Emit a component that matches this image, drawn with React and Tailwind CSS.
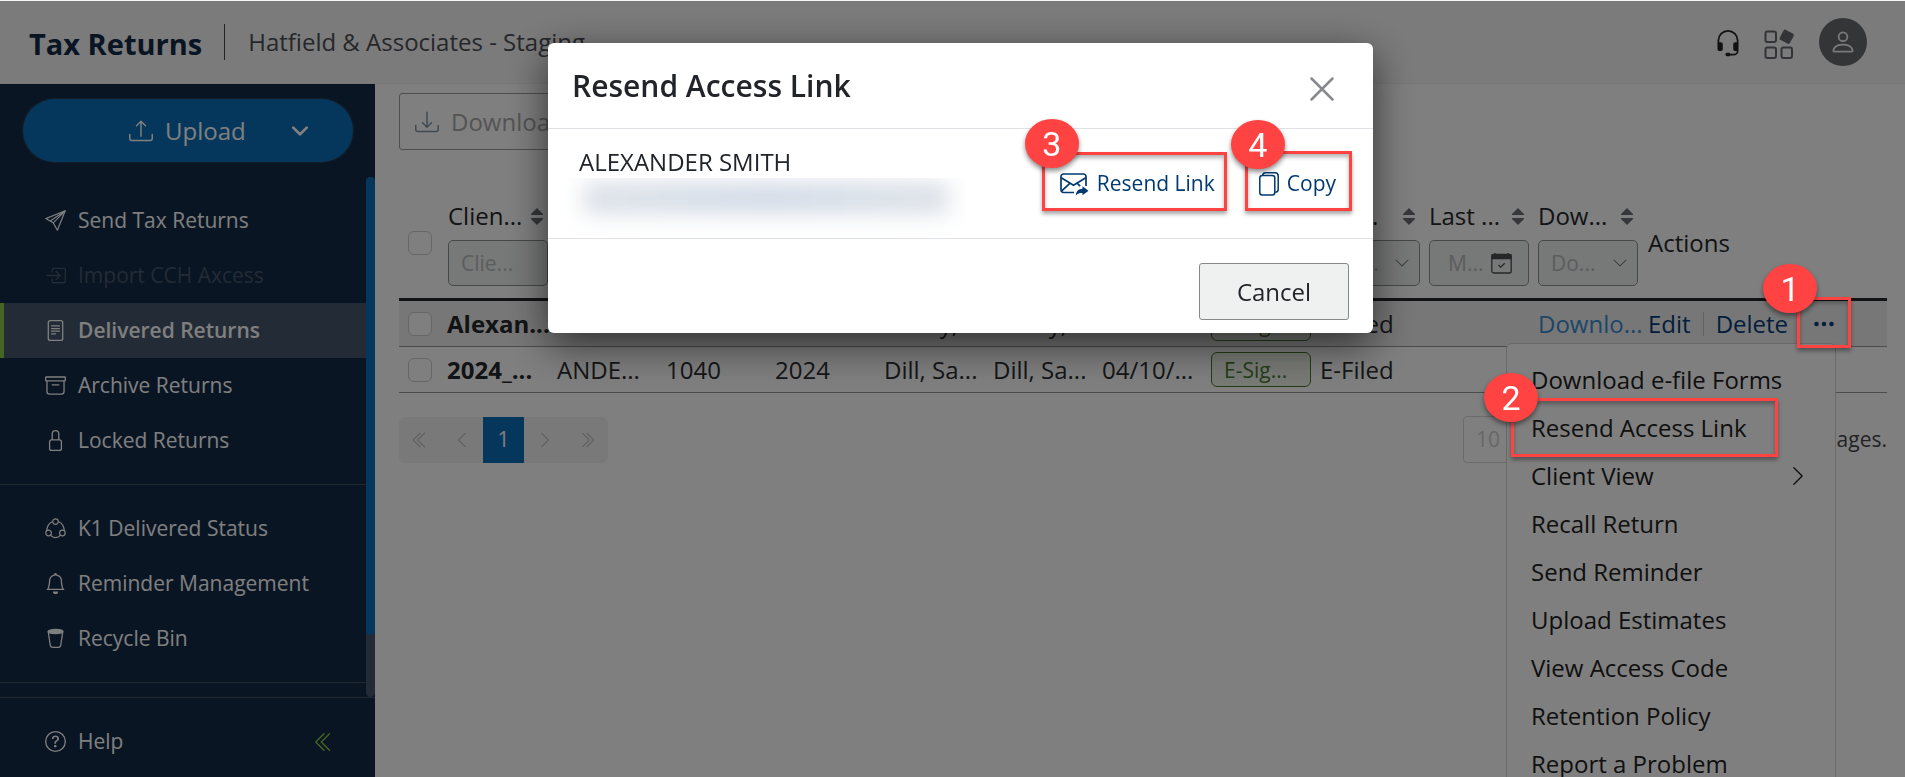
import React from 'react';
import { clsx } from 'clsx';
import {
  BsArchive,
  BsBell,
  BsBoxArrowInRight,
  BsChevronDoubleLeft,
  BsChevronDoubleRight,
  BsChevronDown,
  BsChevronLeft,
  BsChevronRight,
  BsDownload,
  BsFileText,
  BsHeadset,
  BsLock,
  BsPerson,
  BsQuestionCircle,
  BsThreeDots,
  BsUpload,
} from 'react-icons/bs';

const SendIcon = ({ className }) => (
  <svg viewBox="0 0 21 21" className={className} fill="none" stroke="currentColor" strokeWidth="1.2" strokeLinejoin="round">
    <path d="M20.2 0.8 0.8 8.6l7.4 4.2 4.2 7.4Z" />
    <path d="M20.2 0.8 8.2 12.8M20.2 0.8 5.2 11" />
  </svg>
);

const NetworkIcon = ({ className }) => (
  <svg viewBox="0 0 21 21" className={className} fill="none" stroke="currentColor" strokeWidth="1.2">
    <circle cx="10.5" cy="3.6" r="2.8" />
    <circle cx="3.6" cy="15" r="2.8" />
    <circle cx="17.4" cy="15" r="2.8" />
    <path d="M7.7 3.5C4 5 2 8.5 1.7 13M13.3 3.5C17 5 19 8.5 19.3 13M5.5 17.2c2.5 3.2 7.500 3.200 10 0" />
  </svg>
);

const BucketIcon = ({ className }) => (
  <svg viewBox="0 0 21 21" className={className} fill="none" stroke="currentColor" strokeWidth="1.3">
    <path d="m3.2 3.5 2 13.5c.2 1.5 1.3 2.3 2.6 2.3h5.4c1.3 0 2.4-.8 2.6-2.3l2-13.5" />
    <ellipse cx="10.5" cy="3.5" rx="7.4" ry="2" fill="currentColor" />
  </svg>
);

const AppsIcon = () => (
  <svg viewBox="0 0 30 30" className="size-[30px]" fill="none" stroke="currentColor" strokeWidth="2">
    <rect x="1.5" y="2.5" width="10.5" height="10.5" rx="2" />
    <rect x="1.5" y="18.5" width="10.5" height="10.5" rx="2" />
    <rect x="17.5" y="18.5" width="10.5" height="10.5" rx="2" />
    <rect x="17" y="2" width="11.5" height="11.5" rx="2" transform="rotate(28 22.7 7.7)" fill="currentColor" stroke="none" />
  </svg>
);

const ResendIcon = () => (
  <svg viewBox="0 0 29 23" className="h-[23px] w-[29px]" fill="none" stroke="currentColor" strokeWidth="1.7">
    <path d="M14 19.5H3.5A2.5 2.5 0 0 1 1 17V3.5A2.5 2.5 0 0 1 3.5 1h20A2.5 2.5 0 0 1 26 3.5V13" />
    <path d="m1.2 4.8 12.3 7.4 12.3-7.4M1.5 18.2l8.6-8M17 10.2l3.2 3" />
    <path d="M22.500 13.200v2.600c-4 .2-6.300 2.300-6.700 6.700 1.700-2 3.700-2.500 6.700-2.500v2.300l6-4.600Z" fill="currentColor" stroke="none" />
  </svg>
);

const CopyIcon = () => (
  <svg viewBox="0 0 20 24" className="h-6 w-5" fill="none" stroke="currentColor" strokeWidth="1.5">
    <rect x="0.8" y="3.5" width="15" height="19.5" rx="2.5" />
    <path d="M3.8 3.5C3.8 1.8 4.8.8 6.5.8H16c2 0 3.2 1.2 3.2 3.2v13.500c0 1.700-1 2.700-3 2.700" />
  </svg>
);

const CalendarIcon = () => (
  <svg viewBox="0 0 21 21" className="size-[21px] shrink-0" fill="none" stroke="currentColor" strokeWidth="1.3">
    <rect x="0.8" y="1.5" width="19.4" height="18.5" rx="2" />
    <path d="M1 2h19v3.5H1ZM4 0v2M17 0v2" fill="currentColor" />
    <path d="m7.5 12 2.2 2.2 4-4" />
  </svg>
);

const SortIcon = () => (
  <svg viewBox="0 0 12 17" className="h-[17px] w-3 shrink-0 text-[#6b6f75]" fill="currentColor">
    <path d="M6 0 12 6v1H0V6ZM6 17l6-6v-1H0v1Z" />
  </svg>
);

// Numbered red marker with the frame it points at
const Callout = ({ number, frame, badge }) => (
  <>
    <span aria-hidden="true" className={clsx('pointer-events-none absolute z-30 border-[3px] border-[#ff4343] shadow-[0_3px_4px_rgba(0,0,0,0.35),inset_0_3px_4px_rgba(0,0,0,0.3)]', frame)} />
    <span className={clsx('pointer-events-none absolute z-30 flex h-[49px] w-[54px] items-center justify-center rounded-[50%] bg-[#ff4343] font-[Roboto,sans-serif] text-[34px] leading-none font-normal text-white shadow-[0_3px_5px_rgba(0,0,0,0.45)]', badge)}>
      {number}
    </span>
  </>
);

const mainNav = [
  { label: 'Send Tax Returns', icon: SendIcon },
  { label: 'Import CCH Axcess', icon: BsBoxArrowInRight, disabled: true },
  { label: 'Delivered Returns', icon: BsFileText, active: true },
  { label: 'Archive Returns', icon: BsArchive },
  { label: 'Locked Returns', icon: BsLock },
];

const toolsNav = [
  { label: 'K1 Delivered Status', icon: NetworkIcon },
  { label: 'Reminder Management', icon: BsBell },
  { label: 'Recycle Bin', icon: BucketIcon },
];

const menuItems = [
  'Download e-file Forms',
  'Resend Access Link',
  'Client View',
  'Recall Return',
  'Send Reminder',
  'Upload Estimates',
  'View Access Code',
  'Retention Policy',
  'Report a Problem',
];

const columns = [
  { label: 'Clien...', hint: 'Clie...', type: 'text' },
  { label: 'Clien...', hint: 'Clie...', type: 'text' },
  { label: 'Type', hint: 'Ty...', type: 'select' },
  { label: 'Tax ...', hint: 'Ta...', type: 'select' },
  { label: 'Part...', hint: 'Pa...', type: 'select' },
  { label: 'Sent ...', hint: 'Se...', type: 'select' },
  { label: 'Sent ...', hint: 'M...', type: 'date' },
  { label: 'Sign...', hint: 'Si...', type: 'select' },
  { label: 'E-Fi...', hint: 'E-F...', type: 'select' },
  { label: 'Last ...', hint: 'M...', type: 'date' },
  { label: 'Dow...', hint: 'Do...', type: 'select' },
];

const rows = [
  { name: 'Alexan...', cells: ['SMIT...', '1040', '2024', 'Henry, ...', 'Henry, ...', '04/10/...'], download: 'Downlo...', open: true },
  { name: '2024_...', cells: ['ANDE...', '1040', '2024', 'Dill, Sa...', 'Dill, Sa...', '04/10/...'] },
];

const NavList = ({ items }) => (
  <ul>
    {items.map(({ label, icon: Icon, active, disabled }) => (
      <li key={label}>
        <a
          href="#"
          aria-current={active ? 'page' : undefined}
          aria-disabled={disabled}
          className={clsx(
            'flex h-[55px] items-center gap-3 border-l-4 pl-[41px] text-[21px]',
            active ? 'border-[#88cc44] bg-[#44566c] font-semibold' : 'border-transparent font-medium',
            disabled ? 'text-[#46566a]' : 'text-white',
          )}
        >
          <Icon className="size-[21px]" />
          {label}
        </a>
      </li>
    ))}
  </ul>
);

const Sidebar = () => (
  <aside className="flex w-[375px] shrink-0 flex-col bg-[#122a46] text-white">
    <div className="pt-[15px] pr-[22px] pb-[15px] pl-[23px]">
      <button className="flex h-[63px] w-full items-center rounded-full bg-[#086eb6] pr-[44px] pl-[106px] text-2xl shadow-[0_0_3px_rgba(255,255,255,0.2)]">
        <BsUpload className="mr-3 size-6" />
        Upload
        <BsChevronDown className="ml-auto size-[18px]" strokeWidth="1.5" />
      </button>
    </div>
    <div className="flex min-h-0 flex-1">
      <nav className="flex-1 overflow-hidden">
        <div className="border-b border-[#44505f] pt-4 pb-4">
          <NavList items={mainNav} />
        </div>
        <div className="border-b border-[#44505f] pt-4 pb-4">
          <NavList items={toolsNav} />
        </div>
      </nav>
      <div className="w-[9px] rounded-full bg-[#44566c]">
        <div className="h-[88%] rounded-full bg-[#086eb6]" />
      </div>
    </div>
    <div className="flex h-20 shrink-0 items-center justify-between border-t border-[#44505f] pt-2 pr-10 pl-[45px]">
      <a href="#" className="flex items-center gap-3 text-[21px] font-medium">
        <BsQuestionCircle className="size-[21px]" />
        Help
      </a>
      <button aria-label="Collapse menu" className="text-[#88cc44]">
        <BsChevronDoubleLeft className="size-[22px]" />
      </button>
    </div>
  </aside>
);

const ColumnFilter = ({ label, hint, type }) => {
  const box = 'h-[46px] w-full rounded-[5px] border border-[#8c9092] bg-[#eff0f0] text-[21px]';

  if (type === 'select') {
    return (
      <div className="relative">
        <select aria-label={`Filter ${label}`} className={clsx(box, 'appearance-none pl-3 text-[#b9bbbb]')}>
          <option>{hint}</option>
        </select>
        <BsChevronDown className="pointer-events-none absolute top-[15px] right-[10px] size-4 text-[#6f7476]" />
      </div>
    );
  }

  if (type === 'date') {
    return (
      <div className={clsx(box, 'flex items-center pr-4 pl-[18px] text-[#4a4e50]')}>
        <input aria-label={`Filter ${label}`} placeholder={hint} className="w-full min-w-0 placeholder:text-[#b9bbbb]" />
        <CalendarIcon />
      </div>
    );
  }

  return <input aria-label={`Filter ${label}`} placeholder={hint} className={clsx(box, 'px-3 placeholder:text-[#b9bbbb]')} />;
};

const Checkbox = ({ label }) => (
  <input type="checkbox" aria-label={label} className="ml-[9px] block size-6 appearance-none rounded-md border border-[#c9cccf] bg-white" />
);

const ActionMenu = () => (
  <div role="menu" className="absolute top-[42px] right-[51px] w-[330px] rounded-md border border-[#d4d4d4] bg-white pt-3 pb-3 text-2xl text-[#212121]">
    {menuItems.map((item) => (
      <div key={item} className="relative">
        <button role="menuitem" className="flex h-12 w-full items-center justify-between pr-[26px] pl-6 text-left">
          {item}
          {item === 'Client View' && <BsChevronRight className="size-[22px]" />}
        </button>
        {item === 'Resend Access Link' && (
          <Callout number="2" frame="top-[-6px] left-1 h-[59px] w-[267px]" badge="top-[-31px] left-[-23px]" />
        )}
      </div>
    ))}
  </div>
);

const ReturnsTable = () => (
  <table className="w-full table-fixed border-collapse text-left text-2xl">
    <colgroup>
      <col className="w-[44px]" />
      {columns.map((column, idx) => (
        <col key={idx} className="w-[109px]" />
      ))}
      <col />
    </colgroup>
    <thead>
      <tr className="border-b-[3px] border-[#25262a]">
        <th><Checkbox label="Select all returns" /></th>
        {columns.map((column, idx) => (
          <th key={idx} className="pt-[11px] pr-1 pb-3 pl-[5px] font-normal text-[#25272b]">
            <div className="mb-[6px] flex h-9 items-center justify-between pr-[5px] whitespace-nowrap">
              {column.label}
              <SortIcon />
            </div>
            <ColumnFilter {...column} />
          </th>
        ))}
        <th className="pl-[6px] font-normal text-[#25272b]">Actions</th>
      </tr>
    </thead>
    <tbody>
      {rows.map((row) => (
        <tr key={row.name} className={clsx('h-[46px] border-b border-[#96989a] whitespace-nowrap text-[#2b2d31]', row.open && 'bg-[#efefef]')}>
          <td><Checkbox label={`Select ${row.name}`} /></td>
          <td className="pl-1 font-bold text-[#25272b]">{row.name}</td>
          {row.cells.map((cell, idx) => (
            <td key={idx} className="pl-[5px]">{cell}</td>
          ))}
          <td className="pr-1 pl-[5px]">
            <span className="flex h-[35px] items-center rounded-md border border-[#4c7a34] bg-[#f1f5ec] pl-3 text-[21px] text-[#4c7a34]">E-Sig...</span>
          </td>
          <td className="pl-[5px]">E-Filed</td>
          <td />
          <td className="pl-[5px] text-[#3a8cd0]">{row.download}</td>
          <td className="pl-[6px]">
            {row.open && (
              <div className="relative flex h-[45px] items-center text-[#063c78]">
                <button>Edit</button>
                <span className="mx-3 h-6 w-px bg-[#c4c4c4]" />
                <button>Delete</button>
                <button aria-label="More actions" className="absolute right-[51px] flex h-10 w-6 items-center">
                  <BsThreeDots className="size-6" />
                </button>
                <ActionMenu />
                <Callout number="1" frame="top-[-4px] right-[36px] h-[51px] w-[54px]" badge="top-[-37px] right-[70px]" />
              </div>
            )}
          </td>
        </tr>
      ))}
    </tbody>
  </table>
);

const Pagination = () => (
  <div className="mt-[23px] flex items-center justify-between">
    <div className="flex h-[46px] items-center overflow-hidden rounded-md bg-[#f2f2f2] text-[21px] text-[#c0c0c0]">
      <button aria-label="First page" className="flex w-[42px] justify-center"><BsChevronDoubleLeft className="size-[18px]" /></button>
      <button aria-label="Previous page" className="flex w-[42px] justify-center"><BsChevronLeft className="size-[18px]" /></button>
      <button aria-current="page" className="h-full w-[41px] bg-[#086eb6] text-white">1</button>
      <button aria-label="Next page" className="flex w-[42px] justify-center"><BsChevronRight className="size-[18px]" /></button>
      <button aria-label="Last page" className="flex w-[42px] justify-center"><BsChevronDoubleRight className="size-[18px]" /></button>
    </div>
    <div className="flex w-[424px] items-center justify-between text-[21px] text-[#44474b]">
      <select aria-label="Rows per page" disabled className="h-[47px] w-[90px] appearance-none rounded border border-[#d6d6d6] pl-3 text-[#cfcfcf]">
        <option>10 / page</option>
      </select>
      <span>2 items in 1 pages.</span>
    </div>
  </div>
);

const ResendDialog = () => (
  <div className="fixed inset-x-0 top-px bottom-0 z-20 flex items-start justify-center bg-black/50 pt-[42px] pl-4">
    <section role="dialog" aria-labelledby="dialog-title" className="w-[825px] rounded-[6px] bg-white text-[#212529] shadow-[0_12px_40px_rgba(0,0,0,0.6)]">
      <header className="flex h-[86px] items-center justify-between border-b border-[#dee2e6] pr-[39px] pb-px pl-6">
        <h2 id="dialog-title" className="text-[30px] font-semibold">Resend Access Link</h2>
        <button aria-label="Close" className="mt-2 text-[#868a8e]">
          <svg viewBox="0 0 24 24" className="size-6" stroke="currentColor" strokeWidth="2.5" strokeLinecap="round">
            <path d="M1.5 1.5 22.5 22.5M22.5 1.5 1.5 22.5" />
          </svg>
        </button>
      </header>
      <div className="flex h-[110px] justify-between border-b border-[#dee2e6] pr-[37px] pl-[19px]">
        <div className="w-[398px] pt-4">
          <p className="pl-3 text-2xl leading-[33px]">ALEXANDER SMITH</p>
          <div aria-hidden="true" className="h-[56px] overflow-hidden px-4 pt-1">
            <div className="h-8 rounded bg-linear-to-r from-[#dbe1e8] via-[#d3dbe6] to-[#dbe1e8] blur-[11px]" />
          </div>
        </div>
        <div className="flex items-start pt-[37px] text-[21px] text-[#003a70]">
          <div className="relative mr-[44px]">
            <button className="flex h-9 items-center gap-2">
              <ResendIcon />
              Resend Link
            </button>
            <Callout number="3" frame="top-[-14px] -left-[18px] -right-[12px] h-[59px]" badge="top-[-47px] left-[-35px]" />
          </div>
          <div className="relative">
            <button className="flex h-9 items-center gap-2">
              <CopyIcon />
              Copy
            </button>
            <Callout number="4" frame="top-[-15px] -left-[14px] -right-[16px] h-[60px]" badge="top-[-46px] left-[-28px]" />
          </div>
        </div>
      </div>
      <footer className="flex justify-end pt-6 pr-6 pb-[13px]">
        <button className="h-[57px] w-[150px] rounded-[3px] border border-[#85898c] bg-[#eff0f0] text-2xl">Cancel</button>
      </footer>
    </section>
  </div>
);

export default function App() {
  return (
    <div className="flex h-screen flex-col overflow-hidden bg-white font-['Open_Sans','Noto_Sans',sans-serif]">
      <header className="flex h-[84px] shrink-0 items-center border-b border-[#f0f0f0] bg-[#f6f6f6] pr-[38px] pl-[29px]">
        <h1 className="mt-1 text-[29px] font-bold text-[#122a46]">Tax Returns</h1>
        <span className="mr-[23px] ml-[22px] h-9 w-px bg-[#44484e]" />
        <p className="text-2xl text-[#4c4f55]">Hatfield &amp; Associates - Staging</p>
        <div className="ml-auto flex items-center">
          <button aria-label="Support" className="mt-1 mr-[22px] text-[#202225]"><BsHeadset className="size-7" /></button>
          <button aria-label="Apps" className="mt-1 mr-[25px] text-[#65696f]"><AppsIcon /></button>
          <button aria-label="Account" className="flex size-12 items-center justify-center rounded-full bg-[#666a6e] text-[#f4f4f4]">
            <BsPerson className="size-7" />
          </button>
        </div>
      </header>
      <div className="flex min-h-0 flex-1">
        <Sidebar />
        <main className="min-w-0 flex-1 pt-[9px] pr-[18px] pl-6">
          <button disabled className="mb-[37px] flex h-[57px] items-center gap-3 rounded-[3px] border border-[#9a9c9e] px-[15px] text-2xl text-[#a8a8a8]">
            <BsDownload className="size-6 text-[#8094ab]" />
            Download Report
          </button>
          <ReturnsTable />
          <Pagination />
        </main>
      </div>
      <ResendDialog />
    </div>
  );
}
